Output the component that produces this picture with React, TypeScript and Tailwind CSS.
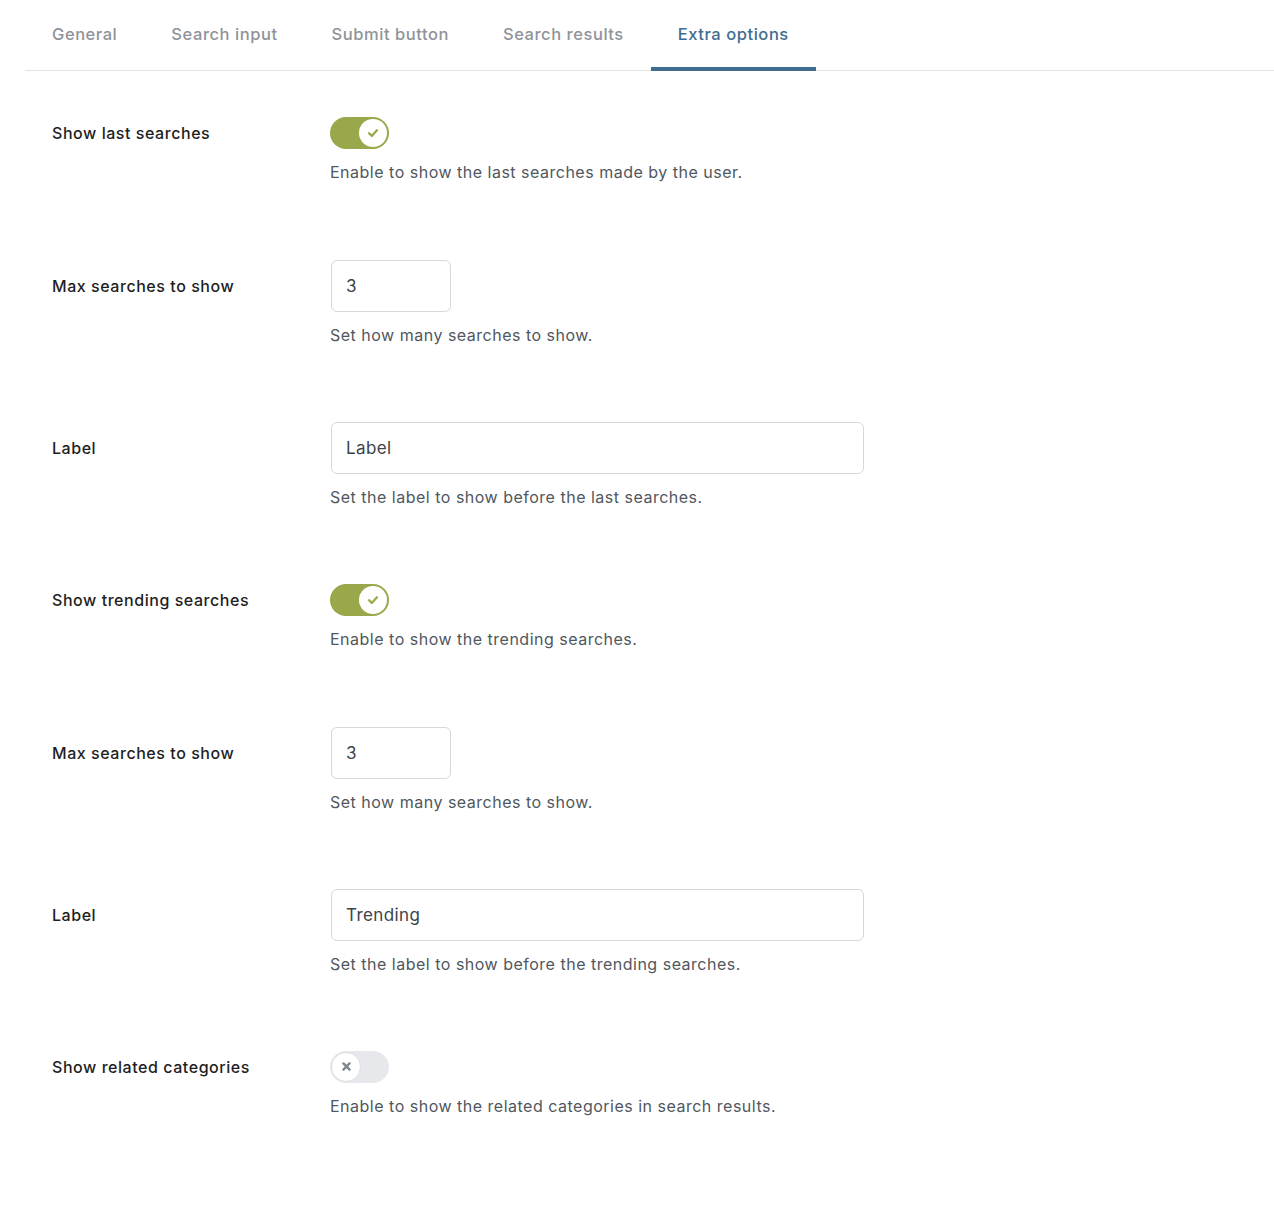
import { useState } from "react";

type Tab = { id: string; label: string };

const tabs: Tab[] = [
  { id: "general", label: "General" },
  { id: "input", label: "Search input" },
  { id: "submit", label: "Submit button" },
  { id: "results", label: "Search results" },
  { id: "extra", label: "Extra options" },
];

function Toggle({ checked, onChange }: { checked: boolean; onChange: (v: boolean) => void }) {
  return (
    <button
      type="button"
      onClick={() => onChange(!checked)}
      className={
        checked
          ? "flex h-[32px] w-[59px] items-center rounded-full bg-[#9aa84b] px-[2px]"
          : "flex h-[32px] w-[59px] items-center rounded-full bg-[#e6e8ec] px-[1px]"
      }
    >
      <span
        className={
          checked
            ? "ml-auto flex h-[28px] w-[28px] items-center justify-center rounded-full bg-white"
            : "flex h-[30px] w-[30px] items-center justify-center rounded-full border border-[#dcdfe3] bg-white"
        }
      >
        {checked ? (
          <svg width="14" height="14" viewBox="0 0 12 12" fill="none">
            <path d="M2.6 6.2 L5 8.5 L9.4 3.7" stroke="#9aa84b" strokeWidth="2" strokeLinecap="round" strokeLinejoin="round" />
          </svg>
        ) : (
          <svg width="11" height="11" viewBox="0 0 10 10" fill="none">
            <path d="M2.2 2.2 L7.8 7.8 M7.8 2.2 L2.2 7.8" stroke="#7f8690" strokeWidth="2.2" strokeLinecap="round" />
          </svg>
        )}
      </span>
    </button>
  );
}

function Field({
  label,
  help,
  control,
  tall,
}: {
  label: string;
  help: string;
  control: React.ReactNode;
  tall: boolean;
}) {
  return (
    <div className={tall ? "flex pb-[76px]" : "flex pb-[77px]"}>
      <div className={tall ? "flex h-[52px] w-[278px] shrink-0 items-center" : "flex h-[32px] w-[278px] shrink-0 items-center"}>
        <span className="text-[16px] font-medium tracking-[0.55px] text-[#1e1e1e]">{label}</span>
      </div>
      <div className="flex flex-col">
        {control}
        <p className="mt-3 text-[16px] leading-[22px] tracking-[0.5px] text-[#50575e]">{help}</p>
      </div>
    </div>
  );
}

export default function App() {
  const [active, setActive] = useState("extra");
  const [showLast, setShowLast] = useState(true);
  const [showTrending, setShowTrending] = useState(true);
  const [showRelated, setShowRelated] = useState(false);
  const [lastMax, setLastMax] = useState("3");
  const [lastLabel, setLastLabel] = useState("Label");
  const [trendMax, setTrendMax] = useState("3");
  const [trendLabel, setTrendLabel] = useState("Trending");

  const inputBase =
    "ml-[1px] h-[52px] rounded-[6px] border border-[#d5d8dc] bg-white px-[14px] text-[17px] tracking-[0.4px] text-[#3c434a] outline-none";

  return (
    <div className="min-h-screen bg-white pl-[25px] font-['Inter',sans-serif] antialiased">
      <div className="flex border-b border-[#dfe3e3]">
        {tabs.map((t) => (
          <button
            key={t.id}
            type="button"
            onClick={() => setActive(t.id)}
            className={
              active === t.id
                ? "-mb-px border-b-[4px] border-[#3f6d92] px-[27px] pt-[22px] pb-[20px] text-[16.5px] font-medium tracking-[0.55px] text-[#3f6d92]"
                : "-mb-px border-b-[4px] border-transparent px-[27px] pt-[22px] pb-[20px] text-[16.5px] font-medium tracking-[0.55px] text-[#8f9399]"
            }
          >
            {t.label}
          </button>
        ))}
      </div>

      <div className="pl-[27px] pt-[46px]">
        <Field
          label="Show last searches"
          help="Enable to show the last searches made by the user."
          tall={false}
          control={<Toggle checked={showLast} onChange={setShowLast} />}
        />
        <Field
          label="Max searches to show"
          help="Set how many searches to show."
          tall
          control={<input className={inputBase + " w-[120px]"} value={lastMax} onChange={(e) => setLastMax(e.target.value)} />}
        />
        <Field
          label="Label"
          help="Set the label to show before the last searches."
          tall
          control={<input className={inputBase + " w-[533px]"} value={lastLabel} onChange={(e) => setLastLabel(e.target.value)} />}
        />
        <Field
          label="Show trending searches"
          help="Enable to show the trending searches."
          tall={false}
          control={<Toggle checked={showTrending} onChange={setShowTrending} />}
        />
        <Field
          label="Max searches to show"
          help="Set how many searches to show."
          tall
          control={<input className={inputBase + " w-[120px]"} value={trendMax} onChange={(e) => setTrendMax(e.target.value)} />}
        />
        <Field
          label="Label"
          help="Set the label to show before the trending searches."
          tall
          control={<input className={inputBase + " w-[533px]"} value={trendLabel} onChange={(e) => setTrendLabel(e.target.value)} />}
        />
        <Field
          label="Show related categories"
          help="Enable to show the related categories in search results."
          tall={false}
          control={<Toggle checked={showRelated} onChange={setShowRelated} />}
        />
      </div>
    </div>
  );
}
